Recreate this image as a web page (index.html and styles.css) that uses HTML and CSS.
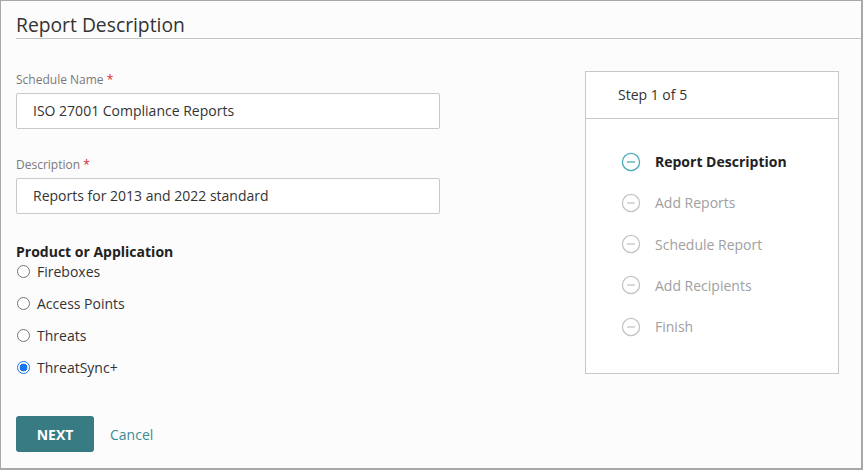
FILE: index.html
```html
<!DOCTYPE html>
<html>
<head>
<meta charset="utf-8">
<link rel="stylesheet" href="styles.css">
</head>
<body>
<div class="frame">
  <h1 class="title">Report Description</h1>
  <div class="content">
    <div class="form">
      <div class="field">
        <label class="label">Schedule Name <span class="req">*</span></label>
        <div class="input">ISO 27001 Compliance Reports</div>
      </div>
      <div class="field">
        <label class="label">Description <span class="req">*</span></label>
        <div class="input">Reports for 2013 and 2022 standard</div>
      </div>
      <div class="group">
        <div class="group-title">Product or Application</div>
        <div class="radios">
          <div class="radio"><span class="dot"></span>Fireboxes</div>
          <div class="radio"><span class="dot"></span>Access Points</div>
          <div class="radio"><span class="dot"></span>Threats</div>
          <div class="radio"><span class="dot on"></span>ThreatSync+</div>
        </div>
      </div>
      <div class="actions">
        <button class="next">NEXT</button>
        <span class="cancel">Cancel</span>
      </div>
    </div>
    <div class="steps">
      <div class="steps-head">Step 1 of 5</div>
      <ul class="step-list">
        <li class="step active"><svg class="ic" viewBox="0 0 20 20"><circle cx="10" cy="10" r="8.6" fill="none" stroke="currentColor" stroke-width="1.3"/><line x1="6" y1="10" x2="14" y2="10" stroke="currentColor" stroke-width="1.3"/></svg>Report Description</li>
        <li class="step"><svg class="ic" viewBox="0 0 20 20"><circle cx="10" cy="10" r="8.6" fill="none" stroke="currentColor" stroke-width="1.3"/><line x1="6" y1="10" x2="14" y2="10" stroke="currentColor" stroke-width="1.3"/></svg>Add Reports</li>
        <li class="step"><svg class="ic" viewBox="0 0 20 20"><circle cx="10" cy="10" r="8.6" fill="none" stroke="currentColor" stroke-width="1.3"/><line x1="6" y1="10" x2="14" y2="10" stroke="currentColor" stroke-width="1.3"/></svg>Schedule Report</li>
        <li class="step"><svg class="ic" viewBox="0 0 20 20"><circle cx="10" cy="10" r="8.6" fill="none" stroke="currentColor" stroke-width="1.3"/><line x1="6" y1="10" x2="14" y2="10" stroke="currentColor" stroke-width="1.3"/></svg>Add Recipients</li>
        <li class="step"><svg class="ic" viewBox="0 0 20 20"><circle cx="10" cy="10" r="8.6" fill="none" stroke="currentColor" stroke-width="1.3"/><line x1="6" y1="10" x2="14" y2="10" stroke="currentColor" stroke-width="1.3"/></svg>Finish</li>
      </ul>
    </div>
  </div>
</div>
</body>
</html>
```
FILE: styles.css
```css
* { box-sizing: border-box; }
html, body { margin: 0; padding: 0; }
body {
  font-family: "Open Sans", "Noto Sans", sans-serif;
  color: #333;
  background: #fff;
}
.frame {
  width: 863px;
  height: 470px;
  border: 1px solid #a8a8a8;
  border-right-width: 2px;
  border-bottom-width: 2px;
  background: #fcfcfc;
  padding-left: 15px;
  overflow: hidden;
}
.title {
  margin: 0;
  padding-top: 10px;
  height: 38px;
  font-size: 19.3px;
  font-weight: 400;
  color: #333;
  border-bottom: 1px solid #c4c4c4;
  line-height: 27px;
}
.content {
  display: flex;
  align-items: flex-start;
}
.form {
  width: 424px;
  padding-top: 32px;
}
.field { margin-bottom: 27px; }
.label {
  display: block;
  font-size: 12px;
  color: #7a7a7a;
  line-height: 17px;
  margin-bottom: 5px;
}
.req { color: #d9262b; }
.input {
  height: 36px;
  border: 1px solid #c9c9c9;
  border-radius: 2px;
  background: #fff;
  padding-left: 16px;
  font-size: 14px;
  line-height: 34px;
  color: #333;
}
.group { padding-top: 1px; }
.group-title {
  font-size: 14px;
  font-weight: 700;
  color: #222;
  line-height: 19px;
}
.radios { margin-top: -6px; }
.radio {
  display: flex;
  align-items: center;
  height: 32px;
  font-size: 14px;
  color: #333;
}
.dot {
  width: 13px;
  height: 13px;
  border: 1px solid #757575;
  border-radius: 50%;
  margin-left: 1px;
  margin-right: 7px;
  background: #fff;
  flex: none;
}
.dot.on {
  border-color: #1a73e8;
  background: radial-gradient(circle, #1a73e8 0 3.6px, #fff 4.2px);
}
.actions {
  display: flex;
  align-items: center;
  margin-top: 33px;
}
.next {
  width: 78px;
  height: 36px;
  border: none;
  border-radius: 3px;
  background: #387b83;
  color: #fff;
  font-family: inherit;
  font-size: 14px;
  font-weight: 700;
  padding: 0;
}
.cancel {
  margin-left: 16px;
  font-size: 14px;
  color: #3e8a94;
}
.steps {
  margin-left: 145px;
  margin-top: 32px;
  width: 254px;
  height: 303px;
  border: 1px solid #c8c8c8;
  background: #fff;
}
.steps-head {
  height: 47px;
  border-bottom: 1px solid #c8c8c8;
  padding-left: 32px;
  font-size: 14px;
  line-height: 45px;
  color: #333;
}
.step-list {
  list-style: none;
  margin: 0;
  padding: 22px 0 0 35px;
}
.step {
  display: flex;
  align-items: center;
  height: 41.25px;
  font-size: 14px;
  color: #a0a0a0;
}
.step.active { color: #222; font-weight: 700; }
.ic {
  width: 20px;
  height: 20px;
  margin-right: 14px;
  color: #c4c4c4;
  flex: none;
}
.step.active .ic { color: #4aa9b9; }
```
